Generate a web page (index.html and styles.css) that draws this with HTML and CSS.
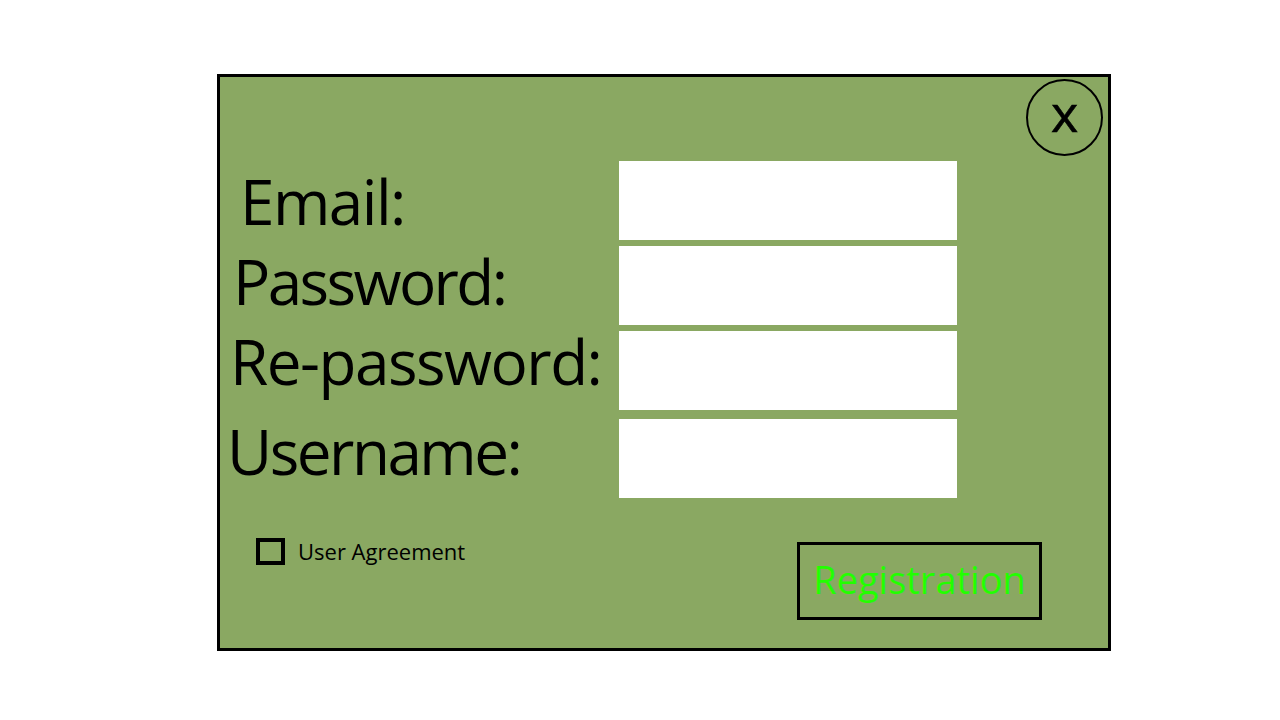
FILE: index.html
```html
<!DOCTYPE html>
<html lang="en">
<head>
  <meta charset="UTF-8" />
  <meta name="viewport" content="width=device-width, initial-scale=1" />
  <title>Registration</title>
  <link rel="stylesheet" href="styles.css">
</head>
<body>
  <div class="page">
    <form class="panel" id="regForm">
      <button type="button" class="close">x</button>

      <div class="field">
        <label class="lbl-email">Email:</label>
        <input type="email" name="email" />
      </div>
      <div class="field">
        <label class="lbl-pass">Password:</label>
        <input type="password" name="password" />
      </div>
      <div class="field">
        <label class="lbl-repass">Re-password:</label>
        <input type="password" name="repassword" />
      </div>
      <div class="field field-last">
        <label class="lbl-user">Username:</label>
        <input type="text" name="username" />
      </div>

      <div class="footer">
        <label class="agree">
          <input type="checkbox" class="check" name="agree" />
          <span>User Agreement</span>
        </label>
        <button type="submit" class="register">Registration</button>
      </div>
    </form>
  </div>
</body>
</html>
```

FILE: styles.css
```css
body {
  margin: 0;
  background: #fff;
  font-family: "Open Sans", "Noto Sans", sans-serif;
}
.page {
  padding: 74px 0 0 217px;
}
.panel {
  position: relative;
  box-sizing: border-box;
  width: 894px;
  height: 577px;
  margin: 0;
  padding-top: 84px;
  background: #8aa862;
  border: 3px solid #000;
}
.close {
  position: absolute;
  top: 2px;
  right: 5px;
  width: 77px;
  height: 77px;
  padding: 0 0 12px 0;
  border: 2px solid #000;
  border-radius: 50%;
  background: transparent;
  font-family: "Open Sans", sans-serif;
  font-size: 52px;
  line-height: 1;
  color: #000;
  -webkit-text-stroke: 0.6px #000;
}
.field {
  display: flex;
  align-items: flex-start;
  margin-bottom: 6px;
}
.field-last {
  margin-top: 9px;
}
.field label {
  flex: none;
  box-sizing: border-box;
  width: 399px;
  font-size: 62px;
  line-height: 62px;
  letter-spacing: -1.5px;
  color: #000;
}
.lbl-email { padding: 9px 0 0 20px; }
.lbl-pass { padding: 4px 0 0 13px; letter-spacing: -2.6px !important; }
.lbl-repass { padding: 0 0 0 10px; margin-top: -1px; }
.lbl-user { padding: 1px 0 0 7px; letter-spacing: -2.5px !important; }
.field input {
  box-sizing: border-box;
  width: 338px;
  height: 79px;
  margin: 0;
  border: none;
  background: #fff;
  font-size: 24px;
  padding: 0 10px;
}
.footer {
  display: flex;
  justify-content: space-between;
  align-items: flex-start;
  margin-top: 38px;
  padding: 0 66px 0 36px;
}
.agree {
  display: flex;
  align-items: center;
  gap: 13px;
  font-size: 22px;
  color: #000;
}
.check {
  appearance: none;
  box-sizing: border-box;
  width: 29px;
  height: 27px;
  margin: 0;
  border: 4px solid #000;
  background: transparent;
}
.register {
  box-sizing: border-box;
  width: 245px;
  height: 78px;
  margin-top: 6px;
  padding: 0 0 4px 0;
  border: 3px solid #000;
  background: transparent;
  font-family: "Open Sans", sans-serif;
  font-size: 38px;
  color: #22ff00;
}
```
